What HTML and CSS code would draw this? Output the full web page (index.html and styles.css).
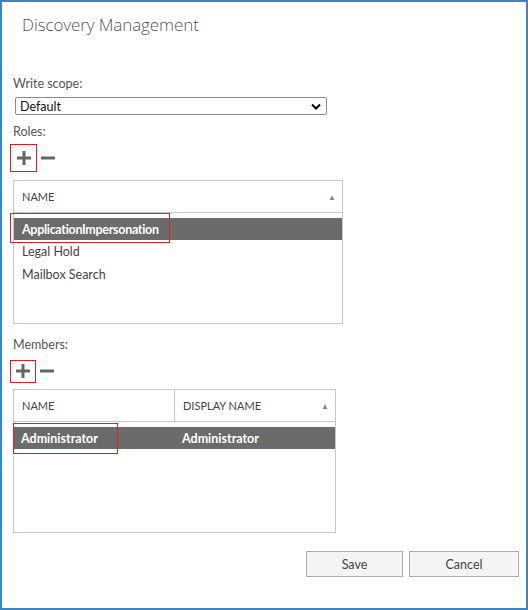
FILE: index.html
```html
<!DOCTYPE html>
<html lang="en">
<head>
    <meta charset="UTF-8">
    <title>Discovery Management</title>
    <link rel="stylesheet" href="styles.css">
</head>
<body>
<div class="dialog">
    <h1 class="title">Discovery Management</h1>

    <div class="field">
        <label class="label">Write scope:</label>
        <div class="select">
            <span>Default</span>
            <svg class="chev" width="10" height="7" viewBox="0 0 10 7"><path d="M1 1.5 L5 5.5 L9 1.5" fill="none" stroke="#000" stroke-width="2"/></svg>
        </div>
    </div>

    <div class="field roles">
        <label class="label">Roles:</label>
        <div class="toolbar">
            <span class="tool marked"><svg width="16" height="16" viewBox="0 0 16 16"><path d="M8 1v14M1 8h14" stroke="#666" stroke-width="3"/></svg></span>
            <span class="tool"><svg width="14" height="16" viewBox="0 0 14 16"><path d="M0 8h14" stroke="#666" stroke-width="3"/></svg></span>
        </div>
        <div class="grid grid-roles">
            <div class="grid-head">
                <div class="col col-full">NAME <span class="sort">&#9650;</span></div>
            </div>
            <div class="grid-body">
                <div class="row selected">
                    <div class="cell">ApplicationImpersonation</div>
                    <span class="mark mark-role"></span>
                </div>
                <div class="row"><div class="cell">Legal Hold</div></div>
                <div class="row"><div class="cell">Mailbox Search</div></div>
            </div>
        </div>
    </div>

    <div class="field members">
        <label class="label">Members:</label>
        <div class="toolbar">
            <span class="tool marked"><svg width="16" height="16" viewBox="0 0 16 16"><path d="M8 1v14M1 8h14" stroke="#666" stroke-width="3"/></svg></span>
            <span class="tool"><svg width="14" height="16" viewBox="0 0 14 16"><path d="M0 8h14" stroke="#666" stroke-width="3"/></svg></span>
        </div>
        <div class="grid grid-members">
            <div class="grid-head">
                <div class="col col-name">NAME</div>
                <div class="col col-display">DISPLAY NAME <span class="sort">&#9650;</span></div>
            </div>
            <div class="grid-body">
                <div class="row selected">
                    <div class="cell cell-name">Administrator</div>
                    <div class="cell">Administrator</div>
                    <span class="mark mark-member"></span>
                </div>
            </div>
        </div>
    </div>

    <div class="actions">
        <button class="btn btn-save">Save</button>
        <button class="btn btn-cancel">Cancel</button>
    </div>
</div>
</body>
</html>
```

FILE: styles.css
```css
html, body {
  margin: 0;
  padding: 0;
  background: #fff;
}
body {
  font-family: Lato, 'Open Sans', sans-serif;
  font-size: 12.5px;
  color: #444;
}
.dialog {
  width: 528px;
  height: 610px;
  box-sizing: border-box;
  border: 2px solid #3a86c4;
  padding: 0 0 0 11px;
  display: flex;
  flex-direction: column;
}
.title {
  font-family: 'Open Sans', sans-serif;
  font-weight: 300;
  font-size: 17px;
  color: #555;
  margin: 11px 0 0 9px;
  line-height: 24px;
  letter-spacing: -0.1px;
}
.field {
  display: flex;
  flex-direction: column;
}
.label {
  color: #555;
  line-height: 16px;
}
.field:first-of-type .label {
  margin-top: 39px;
}
.select {
  margin: 5px 0 0 2px;
  width: 312px;
  height: 18px;
  box-sizing: border-box;
  border: 1px solid #8a8a8a;
  border-radius: 2px;
  display: flex;
  align-items: center;
  justify-content: space-between;
  padding: 0 5px 0 4px;
  color: #111;
}
.roles {
  margin-top: 9px;
}
.members {
  margin-top: 13px;
}
.toolbar {
  display: flex;
  align-items: center;
  gap: 4px;
  margin-top: 4px;
}
.tool {
  width: 27px;
  height: 28px;
  box-sizing: border-box;
  display: flex;
  align-items: center;
  justify-content: center;
  margin-left: -3px;
}
.tool + .tool {
  width: 14px;
  margin-left: 0;
}
.tool.marked {
  border: 1px solid #e02020;
}
.members .tool.marked {
  height: 23px;
  width: 26px;
}
.grid {
  border: 1px solid #c8c8c8;
  margin: 8px 0 0 0;
  box-sizing: border-box;
}
.grid-roles {
  width: 330px;
  height: 144px;
}
.grid-members {
  width: 323px;
  height: 144px;
  margin-top: 4px;
}
.grid-head {
  display: flex;
  height: 31px;
  border-bottom: 1px solid #c8c8c8;
  font-size: 11px;
  color: #444;
}
.col {
  display: flex;
  align-items: center;
  padding-left: 8px;
  box-sizing: border-box;
  position: relative;
}
.col-full {
  flex: 1;
}
.col-name {
  width: 161px;
  border-right: 1px solid #c8c8c8;
}
.col-display {
  flex: 1;
}
.sort {
  position: absolute;
  right: 6px;
  font-size: 8px;
  color: #888;
}
.grid-body {
  padding-top: 5px;
}
.row {
  display: flex;
  height: 23px;
  align-items: center;
  position: relative;
}
.row.selected {
  height: 22px;
  background: #6b6b6b;
  color: #fff;
  font-weight: 700;
  font-size: 12.5px;
}
.grid-roles .row.selected {
  letter-spacing: -0.3px;
}
.cell {
  padding-left: 8px;
  box-sizing: border-box;
}
.grid-members .cell {
  padding-left: 7px;
}
.cell-name {
  width: 161px;
}
.mark {
  position: absolute;
  border: 1px solid #e02020;
  box-sizing: border-box;
}
.mark-role {
  left: -4px;
  top: -5px;
  width: 160px;
  height: 30px;
}
.mark-member {
  left: -1px;
  top: -4px;
  width: 105px;
  height: 31px;
}
.actions {
  display: flex;
  justify-content: flex-end;
  gap: 6px;
  margin: 18px 7px 0 0;
}
.btn {
  height: 26px;
  box-sizing: border-box;
  border: 1px solid #adadad;
  background: #f4f4f4;
  font-family: Lato, 'Open Sans', sans-serif;
  font-size: 12.5px;
  color: #444;
}
.btn-save {
  width: 97px;
}
.btn-cancel {
  width: 110px;
}
```
